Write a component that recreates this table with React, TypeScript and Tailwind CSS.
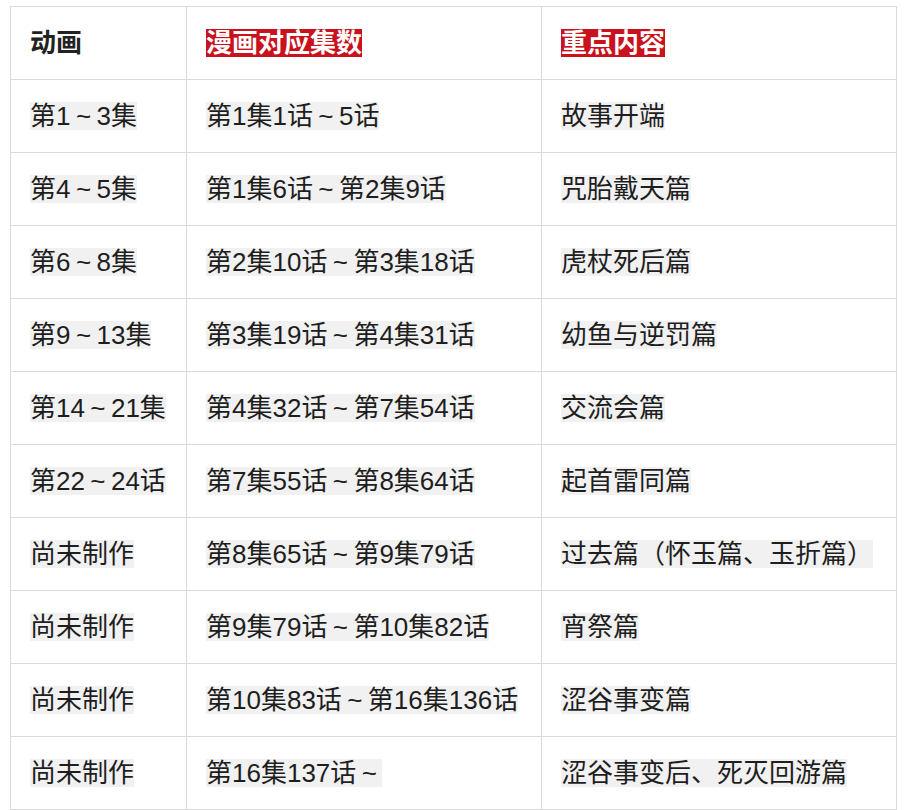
import React from "react";

const rows: [string, string, string][] = [
  ["第1～3集", "第1集1话～5话", "故事开端"],
  ["第4～5集", "第1集6话～第2集9话", "咒胎戴天篇"],
  ["第6～8集", "第2集10话～第3集18话", "虎杖死后篇"],
  ["第9～13集", "第3集19话～第4集31话", "幼鱼与逆罚篇"],
  ["第14～21集", "第4集32话～第7集54话", "交流会篇"],
  ["第22～24话", "第7集55话～第8集64话", "起首雷同篇"],
  ["尚未制作", "第8集65话～第9集79话", "过去篇（怀玉篇、玉折篇）"],
  ["尚未制作", "第9集79话～第10集82话", "宵祭篇"],
  ["尚未制作", "第10集83话～第16集136话", "涩谷事变篇"],
  ["尚未制作", "第16集137话～", "涩谷事变后、死灭回游篇"],
];

const font = { fontFamily: '"Liberation Sans", "Noto Sans CJK SC", sans-serif' };

function Cell({ w, children }: { w: string; children: React.ReactNode }) {
  return (
    <div className={`${w} h-[73px] flex items-center pl-[19px] border-b border-r border-[#dadada]`}>
      {children}
    </div>
  );
}

function Txt({ s }: { s: string }) {
  const parts = s.split("～");
  return (
    <span className="inline-block leading-[28px] text-[26px] text-[#1e1e1e] bg-[#f1f1f1] whitespace-nowrap">
      {parts.map((p, i) => (
        <React.Fragment key={i}>
          {p}
          {i < parts.length - 1 && (
            <span className="inline-block w-[26px] text-center">~</span>
          )}
        </React.Fragment>
      ))}
    </span>
  );
}

export default function App() {
  return (
    <div className="w-[905px] h-[810px] bg-white overflow-hidden pt-[6px] pl-[10px]" style={font}>
      <div className="w-[887px] border-l border-t border-[#dadada]">
        <div className="flex">
          <Cell w="w-[176px]">
            <span className="inline-block leading-[28px] text-[26px] font-bold text-[#222]">动画</span>
          </Cell>
          <Cell w="w-[355px]">
            <span className="inline-block leading-[28px] text-[26px] font-bold text-white bg-[#c8121d]">漫画对应集数</span>
          </Cell>
          <Cell w="w-[355px]">
            <span className="inline-block leading-[28px] text-[26px] font-bold text-white bg-[#c8121d]">重点内容</span>
          </Cell>
        </div>
        {rows.map((r, i) => (
          <div className="flex" key={i}>
            <Cell w="w-[176px]">
              <Txt s={r[0]} />
            </Cell>
            <Cell w="w-[355px]">
              <Txt s={r[1]} />
            </Cell>
            <Cell w="w-[355px]">
              <Txt s={r[2]} />
            </Cell>
          </div>
        ))}
      </div>
    </div>
  );
}
